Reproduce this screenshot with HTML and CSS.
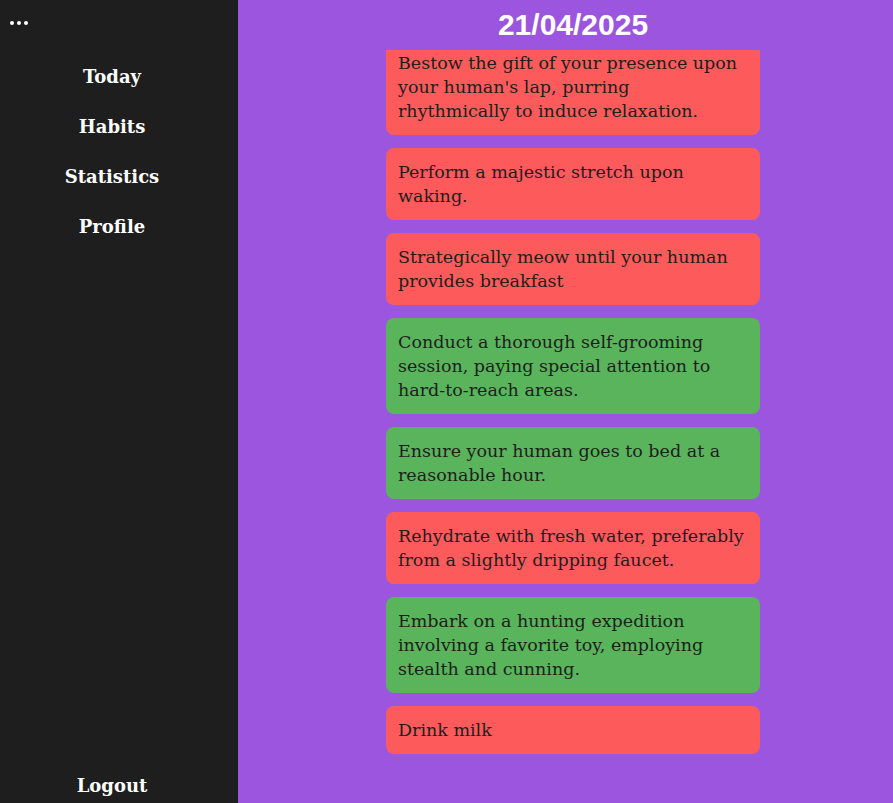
FILE: index.html
```html
<!DOCTYPE html>
<html lang="en">
<head>
<meta charset="utf-8">
<title>Habits</title>
<link rel="stylesheet" href="styles.css">
</head>
<body>
<div class="app">
  <aside class="sidebar">
    <div class="menu-btn"><span class="dot"></span><span class="dot"></span><span class="dot"></span></div>
    <nav class="nav">
      <a class="nav-link">Today</a>
      <a class="nav-link">Habits</a>
      <a class="nav-link">Statistics</a>
      <a class="nav-link">Profile</a>
    </nav>
    <a class="nav-link logout">Logout</a>
  </aside>
  <main class="main">
    <div class="column">
      <h1 class="date">21/04/2025</h1>
      <div class="scroller">
        <ul class="habits">
          <li class="habit todo">Bestow the gift of your presence upon your human's lap, purring rhythmically to induce relaxation.</li>
          <li class="habit todo">Perform a majestic stretch upon waking.</li>
          <li class="habit todo">Strategically meow until your human provides breakfast</li>
          <li class="habit done">Conduct a thorough self-grooming session, paying special attention to hard-to-reach areas.</li>
          <li class="habit done">Ensure your human goes to bed at a reasonable hour.</li>
          <li class="habit todo">Rehydrate with fresh water, preferably from a slightly dripping faucet.</li>
          <li class="habit done">Embark on a hunting expedition involving a favorite toy, employing stealth and cunning.</li>
          <li class="habit todo">Drink milk</li>
        </ul>
      </div>
    </div>
  </main>
</div>
</body>
</html>
```
FILE: styles.css
```css
* { box-sizing: border-box; }
html, body { margin: 0; padding: 0; height: 100%; }
body { font-family: "DejaVu Serif", Georgia, serif; background: #9b55df; overflow: hidden; }
.app { display: flex; height: 803px; }
.sidebar {
  width: 238px; flex: none; background: #1e1e1e; color: #fff;
  display: flex; flex-direction: column; padding-right: 14px;
}
.menu-btn { height: 52px; display: flex; align-items: center; gap: 3px; padding-left: 10px; padding-bottom: 6px; }
.dot { width: 4px; height: 4px; border-radius: 50%; background: #fff; }
.nav { display: flex; flex-direction: column; }
.nav-link {
  display: block; text-align: center; font-weight: bold; font-size: 18px;
  line-height: 50px; color: #fff; cursor: pointer;
}
.logout { margin-top: auto; line-height: 34px; }
.main { flex: 1; display: flex; }
.column { width: 374px; margin-left: 148px; display: flex; flex-direction: column; height: 803px; }
.date {
  margin: 0; height: 50px; line-height: 50px; text-align: center;
  font-family: "Liberation Sans", Arial, sans-serif; font-size: 30px; font-weight: bold; color: #fff;
}
.scroller { flex: 1; overflow: hidden; }
.habits { list-style: none; margin: -11px 0 0; padding: 0; display: flex; flex-direction: column; gap: 13px; }
.habit {
  padding: 12px 15px 12px 12px; border-radius: 8px; font-size: 17.5px; line-height: 24px; color: #1e1e1e;
}
.todo { background: #fd5b5b; }
.done { background: #5ab45c; }
```
